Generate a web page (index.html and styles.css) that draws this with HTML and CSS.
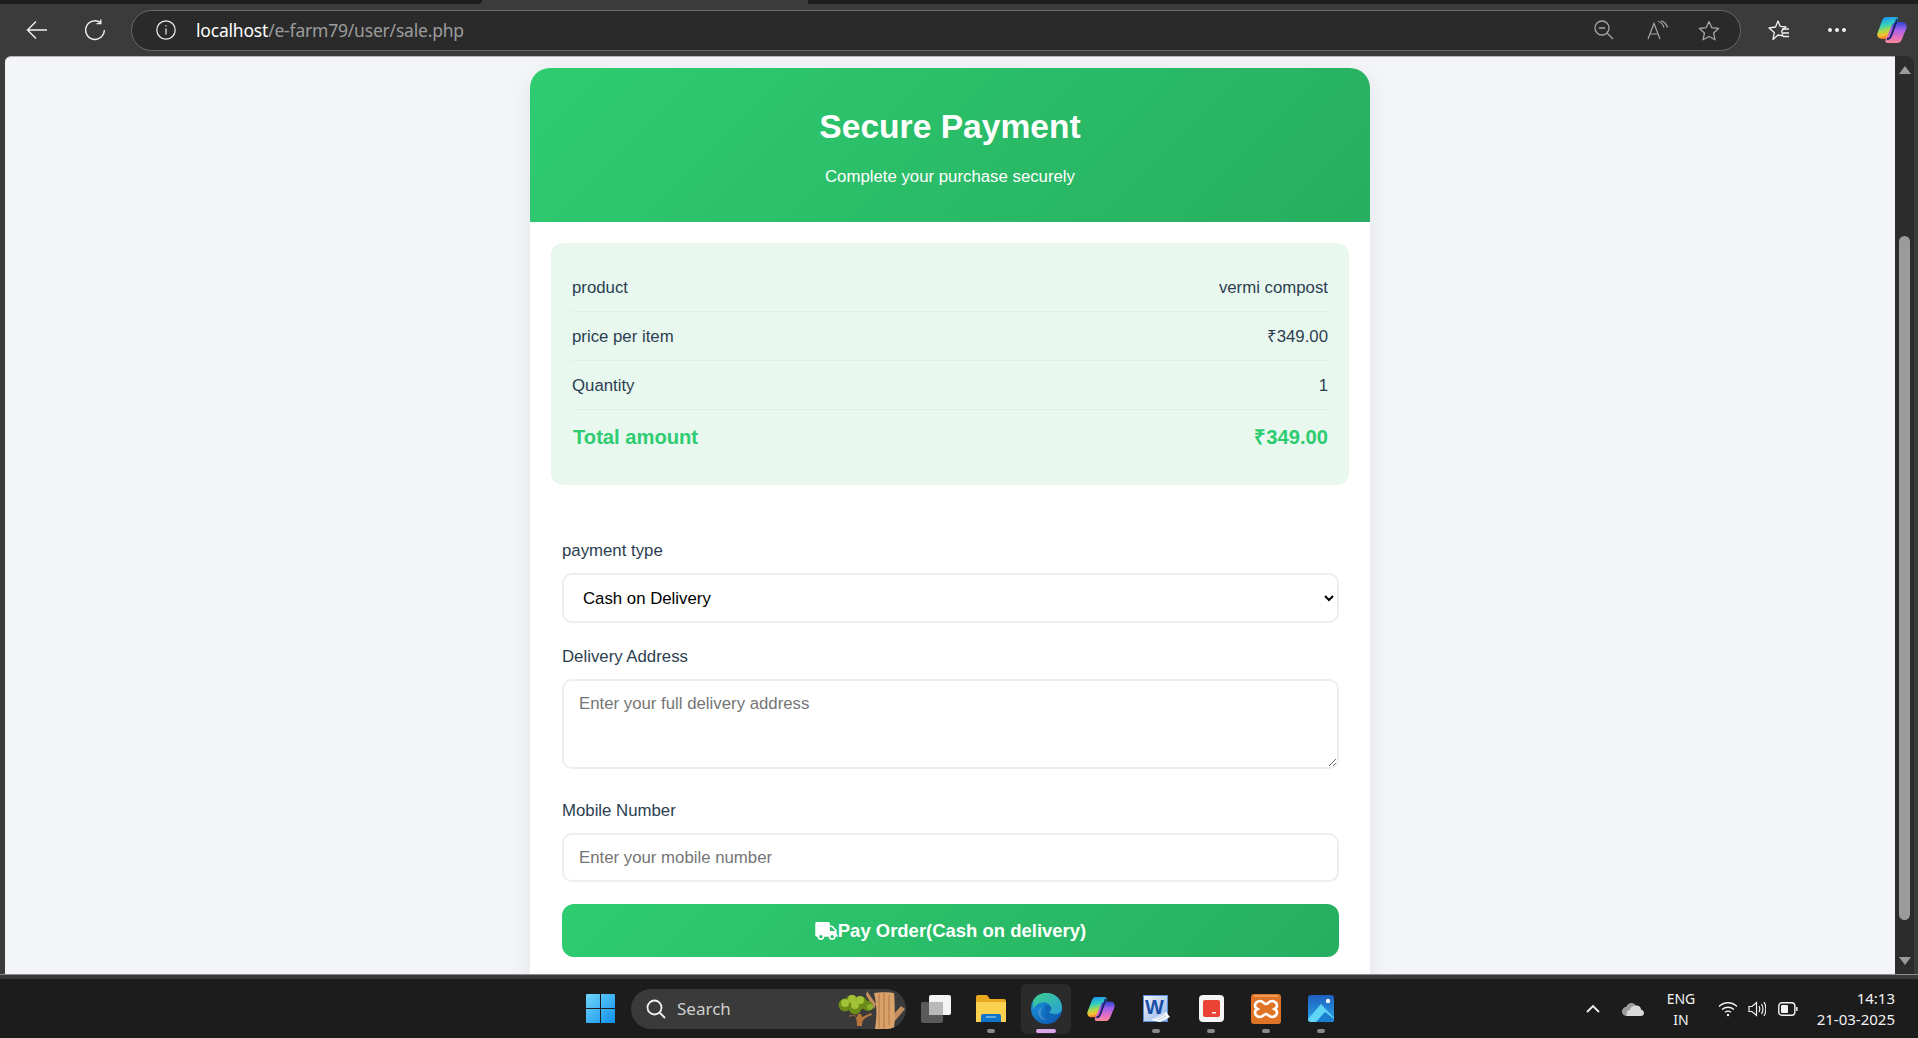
FILE: index.html
```html
<!DOCTYPE html>
<html>
<head>
  <meta charset="utf-8">
  <title>Secure Payment</title>
  <link rel="stylesheet" href="styles.css">
</head>
<body>
  <div class="tabstrip">
    <div class="strip-dark"></div>
    <div class="strip-mid"></div>
    <div class="strip-rest"></div>
  </div>

  <div class="toolbar">
    <svg class="ic-back" width="22" height="20" viewBox="0 0 22 20" fill="none" stroke="#f2f2f2" stroke-width="1.4"><path d="M21 10H1.500M10 1.500L1.500 10l8.500 8.500"/></svg>
    <svg class="ic-reload" width="22" height="22" viewBox="0 0 22 22" fill="none" stroke="#f2f2f2" stroke-width="1.4"><path d="M16.500 3.600A9.300 9.300 0 1 0 20.300 11"/><path d="M16.800 .6v4h-4.200"/></svg>
    <div class="addressbar">
      <svg class="ic-info" width="20" height="20" viewBox="0 0 20 20" fill="none" stroke="#f2f2f2" stroke-width="1.2"><circle cx="10" cy="10" r="9.200"/><path d="M10 8.600v6"/><path d="M10 5.200v1.400"/></svg>
      <span class="url"><span class="url-host">localhost</span>/e-farm79/user/sale.php</span>
      <svg class="ic-zoom" width="20" height="20" viewBox="0 0 20 20" fill="none" stroke="#a6a6a6" stroke-width="1.3"><circle cx="8" cy="8" r="7"/><path d="M4.800 8h6.400M13 13l6 6"/></svg>
      <svg class="ic-read" width="21" height="20" viewBox="0 0 21 20" fill="none" stroke="#a6a6a6" stroke-width="1.2"><path d="M1 19L7 3.500 13 19M3 14h8"/><path d="M11 1.500c3 .5 5 2.500 6 6"/><path d="M14 .8c3 .8 5.500 3 6.500 6.700"/></svg>
      <svg class="ic-star" width="22" height="21" viewBox="0 0 22 21" fill="none" stroke="#a6a6a6" stroke-width="1.3" stroke-linejoin="round"><path d="M11 1.500l2.900 6.200 6.700.8-5 4.600 1.400 6.700L11 16.500l-6 3.300 1.400-6.700-5-4.600 6.700-.8z"/></svg>
    </div>
    <svg class="ic-favs" width="22" height="21" viewBox="0 0 22 21" fill="none" stroke="#f2f2f2" stroke-width="1.3" stroke-linejoin="round"><path d="M10 1l2.300 5.400 5.700.6-4.300 3.800 1 5-4.700-.8L5 19.500l1.300-7L1 8l6.500-1z"/><path d="M14 9h7M15 13h6M15 16.500h6"/></svg>
    <div class="ic-dots"><i></i><i></i><i></i></div>
    <svg class="ic-copilot" width="30" height="28" viewBox="0 0 30 28">
      <defs>
        <linearGradient id="cpLeft" x1=".3" y1="0" x2=".5" y2="1"><stop offset="0" stop-color="#1e8ff0"/><stop offset=".35" stop-color="#2fd0c0"/><stop offset=".6" stop-color="#a8d84a"/><stop offset=".8" stop-color="#f8c030"/><stop offset="1" stop-color="#f05a28"/></linearGradient>
        <linearGradient id="cpRight" x1=".5" y1="0" x2=".5" y2="1"><stop offset="0" stop-color="#2a46d0"/><stop offset=".35" stop-color="#a060e8"/><stop offset=".75" stop-color="#e870c0"/><stop offset="1" stop-color="#f48a90"/></linearGradient>
        <g id="copilotMark">
          <path d="M9 1h10c2 0 2.500 1.500 2 3L15 20c-1 2-2.500 3-4.500 3H5c-3.500 0-5.500-3-4.500-6L5 5c1-2.500 2-4 4-4z" fill="url(#cpLeft)"/>
          <path d="M20 6h5c3.500 0 5.500 3 4.500 6L25 23c-1 2.500-2.500 4-4.500 4h-10c-2 0-2.500-1.500-2-3L15 9c1-2 3-3 5-3z" fill="url(#cpRight)"/>
          <path d="M19.500 3c.5 1 0 2-.5 3.500L14 20c-.5 1.500-1.500 3-4 3" fill="none" stroke="#1a2368" stroke-width="2"/>
        </g>
      </defs>
      <use href="#copilotMark"/>
    </svg>
  </div>

  <div class="window-row">
    <main class="page">
      <div class="card">
        <header class="card-head">
          <h1>Secure Payment</h1>
          <p>Complete your purchase securely</p>
        </header>

        <section class="summary">
          <div class="row"><span>product</span><span>vermi compost</span></div>
          <div class="row"><span>price per item</span><span>₹349.00</span></div>
          <div class="row"><span>Quantity</span><span>1</span></div>
          <div class="row row-total"><span>Total amount</span><span>₹349.00</span></div>
        </section>

        <form class="pay-form">
          <div class="field">
            <label for="ptype">payment type</label>
            <select id="ptype"><option>Cash on Delivery</option></select>
          </div>
          <div class="field">
            <label for="addr">Delivery Address</label>
            <textarea id="addr" placeholder="Enter your full delivery address"></textarea>
          </div>
          <div class="field">
            <label for="mobile">Mobile Number</label>
            <input id="mobile" type="text" placeholder="Enter your mobile number">
          </div>
          <button type="button" class="pay-btn">
            <svg width="23" height="18" viewBox="0 0 640 512" fill="#fff"><path d="M624 352h-16V243.900c0-12.700-5.100-24.900-14.100-33.900L494 110.100c-9-9-21.200-14.100-33.900-14.100H416V48c0-26.500-21.500-48-48-48H48C21.500 0 0 21.500 0 48v320c0 26.500 21.500 48 48 48h16c0 53 43 96 96 96s96-43 96-96h128c0 53 43 96 96 96s96-43 96-96h48c8.800 0 16-7.200 16-16v-32c0-8.800-7.200-16-16-16zM160 464c-26.500 0-48-21.500-48-48s21.500-48 48-48 48 21.500 48 48-21.500 48-48 48zm320 0c-26.500 0-48-21.500-48-48s21.500-48 48-48 48 21.500 48 48-21.500 48-48 48zm80-208H416V144h44.100l99.900 99.900V256z"/></svg>Pay Order(Cash on delivery)
          </button>
        </form>
      </div>
    </main>

    <div class="scrollbar">
      <div class="arrow arrow-up"></div>
      <div class="thumb"></div>
      <div class="arrow arrow-down"></div>
    </div>
  </div>

  <div class="window-foot"></div>

  <footer class="taskbar">
    <div class="slot">
      <svg width="29" height="29" viewBox="0 0 29 29">
        <defs><linearGradient id="winG" x1="0" y1="0" x2="1" y2="1"><stop offset="0" stop-color="#6fd6fb"/><stop offset="1" stop-color="#0f8fec"/></linearGradient></defs>
        <path d="M0 1a1 1 0 0 1 1-1h13v14H0zM15 0h13a1 1 0 0 1 1 1v13H15zM0 15h14v14H1a1 1 0 0 1-1-1zM15 15h14v13a1 1 0 0 1-1 1H15z" fill="url(#winG)"/>
      </svg>
    </div>

    <div class="search">
      <svg width="20" height="20" viewBox="0 0 20 20" fill="none" stroke="#f0f0f0" stroke-width="1.8"><circle cx="8.500" cy="8.500" r="7"/><path d="M13.500 13.500l5.500 5.500"/></svg>
      <span>Search</span>
      <svg class="search-art" width="68" height="40" viewBox="0 0 68 40">
        <path d="M29 2l9 13-2 5L28 6zM63 17l4 3-11 13-2-6z" fill="#c18f60"/>
        <path d="M36 4c6-1 15-1 20 0 1 10 1 26 0 36H37c2-12 2-24-1-36z" fill="#d9a26b"/>
        <path d="M41 5v34M46 4v36M51 6v30" stroke="#b67d4a" stroke-width="1.200" fill="none"/>
        <path d="M17 26c1 3 2 5 2 11h5c0-5 1-8 10-11l-1-2-9 4-1-3h-3l-1 3-7-2-1 2z" fill="#b5763c"/>
        <g fill="#6c8c18">
          <circle cx="7" cy="16" r="6.500"/><circle cx="14" cy="13" r="7"/><circle cx="23" cy="14" r="6.500"/><circle cx="30" cy="17" r="5"/><circle cx="17" cy="19" r="6.500"/>
        </g>
        <g fill="#a4c238">
          <circle cx="7" cy="14" r="4"/><circle cx="14" cy="10" r="4"/><circle cx="22" cy="11" r="4"/><circle cx="17" cy="16" r="4"/>
        </g>
        <circle cx="32" cy="18" r="3" fill="#8bb02c"/>
      </svg>
    </div>

    <div class="apps">
      <div class="slot">
        <svg width="30" height="28" viewBox="0 0 30 28"><rect x="0" y="7" width="22" height="21" rx="2" fill="#5a5a5a"/><rect x="8" y="0" width="22" height="20" rx="2" fill="#f4f4f4"/><rect x="8" y="7" width="14" height="13" fill="#b9b9b9"/></svg>
      </div>
      <div class="slot">
        <svg width="30" height="27" viewBox="0 0 30 27"><path d="M0 2a2 2 0 0 1 2-2h9l3 4h14a2 2 0 0 1 2 2v21H0z" fill="#e9a81d"/><path d="M0 7h30v20H0z" fill="#fbd24f"/><path d="M5 27v-6a2 2 0 0 1 2-2h16a2 2 0 0 1 2 2v6z" fill="#0f74c8"/><path d="M10 22h10" stroke="#8fd0f5" stroke-width="1.200"/></svg>
        <i class="dot"></i>
      </div>
      <div class="slot slot-active">
        <svg width="31" height="31" viewBox="0 0 31 31">
          <defs>
            <linearGradient id="edgeA" x1="0" y1="0" x2="1" y2="1"><stop offset="0" stop-color="#3ed08a"/><stop offset="1" stop-color="#2a9fd8"/></linearGradient>
            <linearGradient id="edgeB" x1="0" y1="0" x2="1" y2="1"><stop offset="0" stop-color="#1b9de2"/><stop offset="1" stop-color="#0b4fa8"/></linearGradient>
          </defs>
          <circle cx="15.500" cy="15.500" r="15.500" fill="url(#edgeB)"/>
          <path d="M2 8C5 2 10 0 15.500 0 24 0 31 6 31 15c0 4-3 6-7 6-3 0-6-1-6-2 2-1 3-3 2-5-2-4-7-6-11-4-3 1-5 3-7 6 0-3 .5-6 0-8z" fill="url(#edgeA)"/>
          <path d="M13 13c3-2 7 0 7 2s-2 3-2 4c1 2 4 3 8 2-3 5-8 8-13 7 4-1 1-13 0-15z" fill="#0f65b8"/>
          <path d="M12 14c-3 2-3 8 0 11 1 1 3 2 4 2-5 1-9-3-9-8 0-2 2-4 5-5z" fill="#fff" opacity=".18"/>
        </svg>
        <i class="dot dot-active"></i>
      </div>
      <div class="slot">
        <svg width="28" height="26" viewBox="0 0 30 28"><use href="#copilotMark"/></svg>
      </div>
      <div class="slot">
        <svg width="27" height="27" viewBox="0 0 27 27">
          <defs><linearGradient id="wordG" x1="0" y1="0" x2="1" y2="1"><stop offset="0" stop-color="#f2f6fc"/><stop offset="1" stop-color="#8fb2e6"/></linearGradient></defs>
          <rect x=".5" y=".5" width="24" height="26" fill="url(#wordG)" stroke="#5d8bd6"/>
          <text class="tile-letter" x="11.500" y="18.500" text-anchor="middle">W</text>
          <path d="M8 25l15-8 4 5-10 5z" fill="#fff"/>
          <path d="M12 24l10-5M15 25l8-4" stroke="#9db9e3" stroke-width=".8"/>
        </svg>
        <i class="dot"></i>
      </div>
      <div class="slot">
        <svg width="25" height="27" viewBox="0 0 25 27"><rect width="25" height="27" rx="4" fill="#f5f5f5"/><rect x="4" y="5" width="17" height="17" rx="2" fill="#ea4335"/><rect x="13" y="17" width="4" height="1.500" fill="#fff"/></svg>
        <i class="dot"></i>
      </div>
      <div class="slot">
        <svg width="30" height="30" viewBox="0 0 30 30"><rect width="30" height="30" rx="3" fill="#e07426"/><path d="M3 2h24" stroke="#f5b27a" stroke-width="1.200"/><path d="M9 7c3 0 4 3 6 3s3-3 6-3c3 0 5 2.500 5 4.500 0 2-1.500 3-2.500 3.500 1 .5 2.500 1.500 2.500 3.500 0 2-2 4.500-5 4.500-3 0-4-3-6-3s-3 3-6 3c-3 0-5-2.500-5-4.500 0-2 1.500-3 2.500-3.500C5.500 14.500 4 13.500 4 11.500 4 9.500 6 7 9 7z" fill="none" stroke="#fff" stroke-width="2.600"/></svg>
        <i class="dot"></i>
      </div>
      <div class="slot">
        <svg width="26" height="27" viewBox="0 0 26 27">
          <defs><linearGradient id="phG" x1="0" y1="0" x2="0" y2="1"><stop offset="0" stop-color="#1f5fc0"/><stop offset="1" stop-color="#2aa7e8"/></linearGradient></defs>
          <rect width="26" height="27" rx="3" fill="url(#phG)"/>
          <circle cx="20" cy="6" r="2.200" fill="#f2f6fc"/>
          <path d="M0 24L13 9l13 14v1a3 3 0 0 1-3 3H3a3 3 0 0 1-3-3z" fill="#5fd6f5"/>
          <path d="M8 27l9-10 9 7a3 3 0 0 1-3 3z" fill="#1a7ed0"/>
        </svg>
        <i class="dot"></i>
      </div>
    </div>

    <div class="tray">
      <svg class="tray-chevron" width="16" height="10" viewBox="0 0 16 10" fill="none" stroke="#f2f2f2" stroke-width="1.800"><path d="M2 8l6-6 6 6"/></svg>
      <svg class="tray-cloud" width="22" height="14" viewBox="0 0 22 14"><path d="M5 14a4.500 4.500 0 0 1-.5-9C6 1 11 0 13.500 3.500 17 3 19 5 19 7.500c2 .5 3 2 3 3.500 0 2-1.500 3-3 3z" fill="#d9d9d9"/><path d="M5 14a4.500 4.500 0 0 1-.5-9C6 1 11 0 13.500 3.500 10 4 8 6 8 8c-3 0-4 3-3 6z" fill="#9c9c9c"/></svg>
      <div class="tray-lang">ENG<br>IN</div>
      <svg class="tray-wifi" width="20" height="16" viewBox="0 0 20 16" fill="none" stroke="#f2f2f2" stroke-width="1.300"><path d="M1 5.500c5-5 13-5 18 0M4 8.500c3.500-3 8.500-3 12 0M7 11.300c2-1.500 4-1.500 6 0"/><circle cx="10" cy="14" r="1.200" fill="#f2f2f2" stroke="none"/></svg>
      <svg class="tray-vol" width="18" height="16" viewBox="0 0 18 16" fill="none" stroke="#f2f2f2" stroke-width="1.200"><path d="M1 5.500h3L8.500 1.500v13L4 10.500H1z"/><path d="M11 5c1 2 1 4 0 6M13.500 3c1.800 3 1.800 7 0 10M16 1c2.500 4 2.500 10 0 14"/></svg>
      <svg class="tray-bat" width="20" height="14" viewBox="0 0 20 14" fill="none"><rect x=".8" y=".8" width="16" height="12.400" rx="3" stroke="#f2f2f2" stroke-width="1.400"/><rect x="3" y="3" width="7" height="8" rx="1" fill="#f2f2f2"/><path d="M18.800 5v4" stroke="#f2f2f2" stroke-width="1.500"/></svg>
      <div class="tray-clock">14:13<br>21-03-2025</div>
    </div>
  </footer>
</body>
</html>
```

FILE: styles.css
```css
* { box-sizing: border-box; }

html, body { height: 100%; }

body {
  margin: 0;
  display: flex;
  flex-direction: column;
  overflow: hidden;
  background: #3b3b3b;
  font-family: "Liberation Sans", Arial, sans-serif;
}

/* browser chrome */
.tabstrip { display: flex; height: 4px; flex: none; }
.strip-dark { width: 482px; background: #1d1d1d; border-bottom-right-radius: 4px; }
.strip-mid { width: 326px; background: #3b3b3b; }
.strip-rest { flex: 1; background: #1d1d1d; }

.toolbar {
  flex: none;
  height: 52px;
  display: flex;
  align-items: center;
  padding-left: 26px;
  background: #3b3b3b;
}
.ic-reload { margin-left: 36px; }
.addressbar {
  width: 1610px;
  height: 41px;
  margin-left: 25px;
  display: flex;
  align-items: center;
  padding-left: 24px;
  background: #2a2a2a;
  border: 1px solid #6a6a6a;
  border-radius: 21px;
}
.url {
  margin-left: 20px;
  font: 17.5px "Noto Sans", "Open Sans", sans-serif;
  color: #9c9c9c;
  letter-spacing: -0.2px;
}
.url-host { color: #fff; }
.ic-zoom { margin-left: auto; }
.ic-read { margin-left: 33px; }
.ic-star { margin-left: 30px; margin-right: 20px; }
.ic-favs { margin-left: 27px; }
.ic-dots { display: flex; gap: 3px; margin-left: 38px; }
.ic-dots i { width: 4px; height: 4px; border-radius: 50%; background: #f2f2f2; }
.ic-copilot { margin-left: 31px; }

.window-row { flex: 1; min-height: 0; display: flex; padding-left: 5px; padding-right: 4px; }

.page {
  flex: 1;
  min-width: 0;
  overflow: hidden;
  padding-top: 11px;
  background: #f4f5f9;
  border-top: 1px solid #b5b5b5;
  border-top-left-radius: 6px;
}

.scrollbar {
  width: 19px;
  flex: none;
  display: flex;
  flex-direction: column;
  align-items: center;
  background: #2c2c2c;
  border-top-right-radius: 8px;
  padding-top: 10px;
}
.arrow { width: 0; height: 0; border-left: 6px solid transparent; border-right: 6px solid transparent; }
.arrow-up { border-bottom: 8px solid #9b9b9b; }
.arrow-down { border-top: 8px solid #9b9b9b; }
.thumb { width: 11px; height: 684px; margin: 162px 0 37px; background: #9b9b9b; border-radius: 6px; }

.window-foot { flex: none; height: 5px; background: #3b3b3b; border-top: 1px solid #8c8c8c; }

/* payment card */
.card {
  width: 840px;
  margin: 0 auto;
  background: #fff;
  border-radius: 20px 20px 0 0;
  box-shadow: 0 4px 24px rgba(0, 0, 0, 0.07);
  padding-bottom: 40px;
}
.card-head {
  height: 154px;
  padding-top: 39px;
  text-align: center;
  color: #fff;
  background: linear-gradient(135deg, #2ecc71, #27ae60);
  border-radius: 20px 20px 0 0;
}
.card-head h1 { margin: 0; font-size: 33.6px; line-height: 40px; font-weight: 700; }
.card-head p { margin: 20px 0 0; font-size: 16.8px; line-height: 20px; }

.summary {
  margin: 21px 21px 0;
  padding: 20px 21px;
  height: 242px;
  background: #e8f8ef;
  border-radius: 12px;
  color: #2c3e50;
  font-size: 16.8px;
}
.row {
  display: flex;
  justify-content: space-between;
  height: 49px;
  padding-top: 2px;
  align-items: center;
  line-height: 24px;
  border-bottom: 1px solid #e1efe8;
}
.row-total {
  height: 54px;
  padding: 0 0 0 1px;
  border-bottom: none;
  font-size: 20.16px;
  font-weight: 700;
  color: #2ecc71;
}

.pay-form { padding: 54px 31px 0 32px; }
.field { margin-bottom: 22px; }
.field label {
  display: block;
  margin-bottom: 10px;
  font-size: 16.8px;
  line-height: 24px;
  color: #2c3e50;
}
.field select,
.field textarea,
.field input {
  display: block;
  width: 100%;
  border: 2px solid #eceef0;
  border-radius: 10px;
  padding: 15px;
  font-family: "Liberation Sans", Arial, sans-serif;
  font-size: 16.8px;
  background: #fff;
  color: #000;
}
.field select { height: 50px; padding: 1px 15px 0; }
.field input { height: 49px; padding: 0 15px; }
.field textarea { height: 90px; margin-bottom: 30px; padding: 13px 15px; }
.field input::placeholder,
.field textarea::placeholder { color: #757575; }

.pay-btn {
  display: flex;
  align-items: center;
  justify-content: center;
  width: 100%;
  height: 53px;
  border: none;
  border-radius: 12px;
  color: #fff;
  font-family: "Liberation Sans", Arial, sans-serif;
  font-size: 18.48px;
  font-weight: 700;
  background: linear-gradient(135deg, #2ecc71, #27ae60);
}

/* windows taskbar */
.taskbar {
  flex: none;
  height: 59px;
  display: flex;
  align-items: center;
  padding: 0 23px 0 575px;
  background: #1c1c1c;
  color: #f2f2f2;
  font-family: "Noto Sans", "Open Sans", sans-serif;
}
.slot {
  position: relative;
  width: 50px;
  height: 50px;
  display: flex;
  align-items: center;
  justify-content: center;
  border-radius: 6px;
}
.slot-active { background: #2b2b2b; }
.dot {
  position: absolute;
  left: 21px;
  bottom: 1px;
  width: 8px;
  height: 4px;
  border-radius: 2px;
  background: #8a8a8a;
}
.dot-active { left: 15px; width: 20px; background: #dba6e8; }

.search {
  width: 275px;
  height: 40px;
  margin: 0 5px 0 6px;
  padding-left: 15px;
  display: flex;
  align-items: center;
  background: #3a3a3a;
  border-radius: 20px;
  overflow: hidden;
  font-size: 17px;
  color: #cfcfcf;
}
.search span { margin-left: 11px; }
.search-art { margin-left: auto; }

.apps { display: flex; gap: 5px; }
.tile-letter { font: 700 20px "Liberation Sans", sans-serif; fill: #1d4fa8; }

.tray { margin-left: auto; display: flex; align-items: center; }
.tray-cloud { margin-left: 21px; }
.tray-lang { width: 30px; margin-left: 22px; text-align: center; font-size: 14px; line-height: 21px; white-space: nowrap; }
.tray-wifi { margin-left: 22px; }
.tray-vol { margin-left: 10px; }
.tray-bat { margin-left: 12px; }
.tray-clock { width: 80px; margin-left: 17px; text-align: right; font-size: 15px; line-height: 21px; white-space: nowrap; }
```
